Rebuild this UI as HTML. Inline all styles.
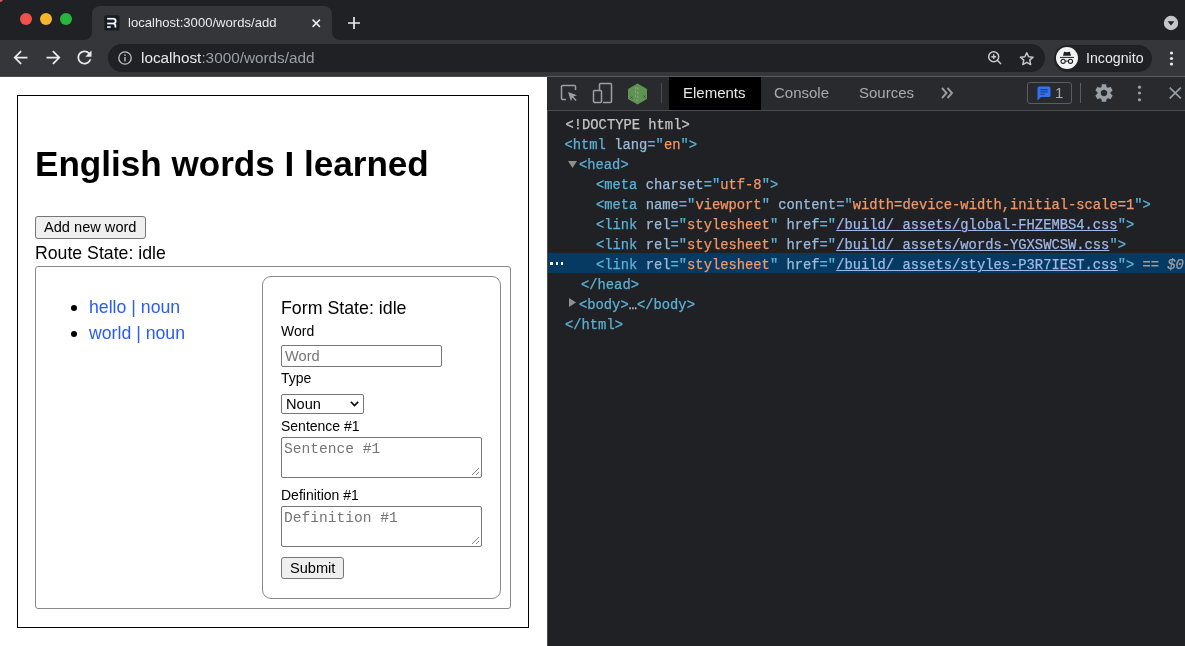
<!DOCTYPE html>
<html><head><meta charset="utf-8">
<style>
*{box-sizing:border-box;margin:0;padding:0}
html,body{width:1185px;height:646px;overflow:hidden;background:#202124;font-family:"Liberation Sans",sans-serif;-webkit-font-smoothing:antialiased}
.t,.m{will-change:transform}
.a{position:absolute}
.t{position:absolute;line-height:1;white-space:pre}
.m{font-family:"Liberation Mono",monospace}
svg{position:absolute;overflow:visible}
</style></head><body>
<!-- ============ CHROME FRAME ============ -->
<div class="a" style="left:0;top:0;width:1185px;height:40px;background:#202124"></div>
<div class="a" style="left:-3px;top:-4px;width:6px;height:6px;border-radius:50%;background:#e8524a"></div>
<div class="a" style="left:20px;top:13px;width:12.4px;height:12.4px;border-radius:50%;background:#f0514a"></div>
<div class="a" style="left:40px;top:13px;width:12.4px;height:12.4px;border-radius:50%;background:#f5b52d"></div>
<div class="a" style="left:60px;top:13px;width:12.4px;height:12.4px;border-radius:50%;background:#27b53c"></div>
<!-- active tab -->
<div class="a" style="left:84px;top:32px;width:256px;height:8px;background:#35363a"></div>
<div class="a" style="left:84px;top:32px;width:8px;height:8px;background:#202124;border-bottom-right-radius:8px"></div>
<div class="a" style="left:332px;top:32px;width:8px;height:8px;background:#202124;border-bottom-left-radius:8px"></div>
<div class="a" style="left:92px;top:6px;width:240px;height:34px;background:#35363a;border-radius:8px 8px 0 0"></div>
<svg style="left:104px;top:15px" width="16" height="16" viewBox="0 0 16 16">
<rect x="0.3" y="0.3" width="15.2" height="15.2" rx="1.5" fill="#1b1b1d"/>
<path d="M3.2 3.7H9.3a2.4 2.4 0 0 1 0 4.8H3.2M9.4 8.6q2 .2 2 2.3V12.6M3.2 12H6.6" stroke="#4f8be8" stroke-width="2.2" fill="none" opacity=".55"/>
<path d="M3.2 3.7H9.3a2.4 2.4 0 0 1 0 4.8H3.2M9.4 8.6q2 .2 2 2.3V12.6M3.2 12H6.6" stroke="#fff" stroke-width="1.5" fill="none"/>
</svg>
<div class="t" style="left:127.5px;top:16.1px;font-size:13.1px;color:#e8eaed">localhost:3000/words/add</div>
<svg style="left:312px;top:18.7px" width="8.5" height="8.5" viewBox="0 0 8.5 8.5"><path d="M0.6 0.6L7.9 7.9M7.9 0.6L0.6 7.9" stroke="#e8eaed" stroke-width="1.5"/></svg>
<svg style="left:348px;top:17px" width="12" height="12" viewBox="0 0 12 12"><path d="M6 0V12M0 6H12" stroke="#e8eaed" stroke-width="1.7"/></svg>
<!-- tab strip dropdown -->
<svg style="left:1163px;top:15px" width="16" height="16" viewBox="0 0 16 16"><circle cx="8" cy="8" r="7.2" fill="#c4c7ca"/><path d="M4.6 6.3H11.4L8 10.4Z" fill="#202124"/></svg>
<!-- toolbar -->
<div class="a" style="left:0;top:40px;width:1185px;height:36px;background:#35363a"></div>
<svg style="left:10.3px;top:47px" width="21" height="21" viewBox="0 0 24 24"><path d="M20 11H7.83l5.59-5.59L12 4l-8 8 8 8 1.41-1.41L7.83 13H20v-2z" fill="#e8eaed"/></svg>
<svg style="left:42.5px;top:47px" width="21" height="21" viewBox="0 0 24 24"><path d="M4 11h12.17l-5.59-5.59L12 4l8 8-8 8-1.41-1.41L16.17 13H4v-2z" fill="#e8eaed"/></svg>
<svg style="left:74px;top:47px" width="21" height="21" viewBox="0 0 24 24"><path d="M17.65 6.35C16.2 4.9 14.21 4 12 4c-4.42 0-7.99 3.58-7.99 8s3.57 8 7.99 8c3.73 0 6.84-2.55 7.73-6h-2.08c-.82 2.33-3.04 4-5.65 4-3.31 0-6-2.69-6-6s2.69-6 6-6c1.66 0 3.14.69 4.22 1.78L13 11h7V4l-2.35 2.35z" fill="#e8eaed"/></svg>
<!-- omnibox -->
<div class="a" style="left:107.5px;top:44px;width:937.5px;height:28px;border-radius:14px;background:#202124"></div>
<svg style="left:117.8px;top:50.8px" width="14" height="14" viewBox="0 0 14 14"><circle cx="7" cy="7" r="6.2" stroke="#c0c3c7" stroke-width="1.3" fill="none"/><rect x="6.3" y="6" width="1.4" height="4.4" fill="#c0c3c7"/><circle cx="7" cy="4.1" r=".85" fill="#c0c3c7"/></svg>
<div class="t" style="left:140.6px;top:50.25px;font-size:15.3px;color:#e8eaed">localhost<span style="color:#9aa0a6">:3000/words/add</span></div>
<svg style="left:987px;top:50px" width="16" height="16" viewBox="0 0 16 16"><circle cx="6.7" cy="6.7" r="5" stroke="#c8cacd" stroke-width="1.5" fill="none"/><path d="M10.3 10.3L14 14M6.7 4.3V9.1M4.3 6.7H9.1" stroke="#c8cacd" stroke-width="1.5"/></svg>
<svg style="left:1019px;top:50.5px" width="15.5" height="15" viewBox="0 0 24 23"><path d="M12 2.5l2.9 6.3 6.9.7-5.2 4.6 1.5 6.8L12 17.4l-6.1 3.5 1.5-6.8-5.2-4.6 6.9-.7z" stroke="#c8cacd" stroke-width="2.3" fill="none" stroke-linejoin="round"/></svg>
<!-- incognito pill -->
<div class="a" style="left:1053.7px;top:44.5px;width:98.5px;height:27px;border-radius:13.5px;background:#202124"></div>
<div class="a" style="left:1055.9px;top:46.7px;width:22.3px;height:22.3px;border-radius:50%;background:#f1f3f4"></div>
<svg style="left:1056px;top:47px" width="22" height="22" viewBox="0 0 22 22"><path d="M7 8.7L7.9 5.2Q8.1 4.6 8.7 4.8L11 5.3L13.3 4.8Q13.9 4.6 14.1 5.2L15 8.7Z" fill="#202124"/><rect x="4" y="9.9" width="14" height="1" fill="#202124"/><circle cx="7.1" cy="14.3" r="2.1" stroke="#202124" stroke-width="1.1" fill="none"/><circle cx="14.5" cy="14.3" r="2.1" stroke="#202124" stroke-width="1.1" fill="none"/><path d="M9.2 14.1H12.4" stroke="#202124" stroke-width="1"/></svg>
<div class="t" style="left:1085.9px;top:51.2px;font-size:14.2px;color:#e8eaed">Incognito</div>
<svg style="left:1169px;top:51px" width="5" height="15" viewBox="0 0 5 15"><circle cx="2.5" cy="2" r="1.6" fill="#e8eaed"/><circle cx="2.5" cy="7.5" r="1.6" fill="#e8eaed"/><circle cx="2.5" cy="13" r="1.6" fill="#e8eaed"/></svg>

<!-- ============ PAGE ============ -->
<div class="a" style="left:0;top:76px;width:547px;height:570px;background:#fff"></div>
<div class="a" style="left:0;top:75.5px;width:547px;height:1px;background:#4a4b4f"></div>
<div class="a" style="left:17px;top:95px;width:512px;height:533px;border:1.2px solid #000"></div>
<div class="t" style="left:35.2px;top:146.1px;font-size:35.1px;font-weight:bold;color:#000">English words I learned</div>
<div class="a" style="left:35px;top:216px;width:111px;height:22.5px;border:1px solid #767676;border-radius:3px;background:#efefef"></div>
<div class="t" style="left:44.2px;top:220px;font-size:14.6px;color:#000">Add new word</div>
<div class="t" style="left:35.1px;top:244.7px;font-size:17.7px;color:#000">Route State: idle</div>
<div class="a" style="left:35px;top:266px;width:476px;height:343px;border:1px solid #8a8a8a;border-radius:3px"></div>
<div class="a" style="left:70.8px;top:304.8px;width:6.4px;height:6.4px;border-radius:50%;background:#000"></div>
<div class="a" style="left:70.8px;top:330.7px;width:6.4px;height:6.4px;border-radius:50%;background:#000"></div>
<div class="t" style="left:88.6px;top:298.8px;font-size:17.7px;color:#285cf4">hello | noun</div>
<div class="t" style="left:88.6px;top:324.6px;font-size:17.7px;color:#285cf4">world | noun</div>
<div class="a" style="left:262px;top:276px;width:239px;height:323px;border:1px solid #8a8a8a;border-radius:9px"></div>
<div class="t" style="left:280.6px;top:299.7px;font-size:17.8px;color:#000">Form State: idle</div>
<div class="t" style="left:280.6px;top:323.6px;font-size:14px;color:#000">Word</div>
<div class="a" style="left:281px;top:345px;width:161px;height:22px;border:1px solid #767676;border-radius:2px;background:#fff"></div>
<div class="t" style="left:284.5px;top:349.1px;font-size:14.6px;color:#757575">Word</div>
<div class="t" style="left:280.6px;top:370.8px;font-size:14px;color:#000">Type</div>
<div class="a" style="left:281px;top:394px;width:83px;height:20px;border:1px solid #767676;border-radius:2px;background:#fff"></div>
<div class="t" style="left:285.5px;top:397px;font-size:14.6px;color:#000">Noun</div>
<svg style="left:349.5px;top:401px" width="9" height="6" viewBox="0 0 9 6"><path d="M0.8 0.8L4.5 4.6L8.2 0.8" stroke="#000" stroke-width="1.6" fill="none"/></svg>
<div class="t" style="left:280.6px;top:419.2px;font-size:14px;color:#000">Sentence #1</div>
<div class="a" style="left:281px;top:437px;width:201px;height:41px;border:1px solid #767676;border-radius:2px;background:#fff"></div>
<div class="t m" style="left:283.8px;top:441.8px;font-size:14.6px;color:#757575">Sentence #1</div>
<svg style="left:470px;top:466px" width="10" height="10" viewBox="0 0 10 10"><path d="M9 2L2 9M9 6L6 9" stroke="#8a8a8a" stroke-width="1"/></svg>
<div class="t" style="left:280.6px;top:488px;font-size:14px;color:#000">Definition #1</div>
<div class="a" style="left:281px;top:506px;width:201px;height:41px;border:1px solid #767676;border-radius:2px;background:#fff"></div>
<div class="t m" style="left:283.8px;top:510.8px;font-size:14.6px;color:#757575">Definition #1</div>
<svg style="left:470px;top:535px" width="10" height="10" viewBox="0 0 10 10"><path d="M9 2L2 9M9 6L6 9" stroke="#8a8a8a" stroke-width="1"/></svg>
<div class="a" style="left:281px;top:557px;width:63px;height:22px;border:1px solid #767676;border-radius:3px;background:#efefef"></div>
<div class="t" style="left:289.5px;top:560.8px;font-size:14.6px;color:#000">Submit</div>

<!-- ============ DEVTOOLS ============ -->
<div class="a" style="left:547px;top:76px;width:638px;height:570px;background:#202124"></div>
<div class="a" style="left:547px;top:76px;width:1px;height:570px;background:#4a4a4d"></div>
<div class="a" style="left:547px;top:76px;width:638px;height:35px;background:#292a2d;border-top:1px solid #5a5b5e;border-bottom:1px solid #4a4c50"></div>
<div class="a" style="left:669px;top:77px;width:92px;height:33px;background:#000"></div>
<svg style="left:560px;top:84px" width="18" height="18" viewBox="0 0 18 18"><path d="M6 15.5H2.5Q1.5 15.5 1.5 14.5V2.5Q1.5 1.5 2.5 1.5H14.5Q15.5 1.5 15.5 2.5V6" stroke="#9aa0a6" stroke-width="1.5" fill="none"/><path d="M8 8L17 11.3L13.3 12.6L16.6 15.9L15.6 16.9L12.3 13.6L11 17.3Z" fill="#9aa0a6"/></svg>
<svg style="left:592px;top:82px" width="21" height="22" viewBox="0 0 21 22"><path d="M7.5 8V2.5Q7.5 1.5 8.5 1.5H18.5Q19.5 1.5 19.5 2.5V19.5Q19.5 20.5 18.5 20.5H11" stroke="#9aa0a6" stroke-width="1.5" fill="none"/><rect x="1.5" y="8.5" width="8" height="12" rx="1" stroke="#9aa0a6" stroke-width="1.5" fill="none"/></svg>
<svg style="left:627px;top:82.5px" width="21" height="22" viewBox="0 0 21 22"><path d="M10.5 0.5L20 6V16L10.5 21.5L1 16V6Z" fill="#5e9352"/><path d="M8.5 4V6M10.8 4.5V6.5M8.5 7.5V9.5M10.8 9V11M8.5 12V14M10.8 13V15M10 16.5V18.5" stroke="#a0a8a0" stroke-width="1" opacity=".8"/><path d="M3.5 13.5L5.5 15.5M3.5 15.5L5.5 13.5M16.5 12.5L18.5 14.5M16.5 14.5L18.5 12.5" stroke="#2f4f2a" stroke-width=".8"/></svg>
<div class="a" style="left:661px;top:83px;width:1px;height:20px;background:#4a4c50"></div>
<div class="t" style="left:683.3px;top:85.3px;font-size:15px;color:#e8e8e8">Elements</div>
<div class="t" style="left:774px;top:85.3px;font-size:15px;color:#a9abae">Console</div>
<div class="t" style="left:859px;top:85.3px;font-size:15px;color:#a9abae">Sources</div>
<svg style="left:941px;top:87px" width="13" height="12" viewBox="0 0 13 12"><path d="M1 1L5.5 6L1 11M6.5 1L11 6L6.5 11" stroke="#9a9c9f" stroke-width="1.9" fill="none"/></svg>
<div class="a" style="left:1027.2px;top:82.2px;width:44.5px;height:21.5px;border:1px solid #5a5d61;border-radius:3px"></div>
<svg style="left:1036.5px;top:86px" width="14" height="15" viewBox="0 0 14 15"><path d="M2 0.5H12Q13.5 0.5 13.5 2V9.5Q13.5 11 12 11H4L0.5 14.5V2Q0.5 0.5 2 0.5Z" fill="#3372f5"/><path d="M3.3 3.6H10.7M3.3 5.9H10.7M3.3 8.2H8" stroke="#1d3d8a" stroke-width="1.1"/></svg>
<div class="t" style="left:1055px;top:85.3px;font-size:15px;color:#a9abae">1</div>
<div class="a" style="left:1079.5px;top:83px;width:1.2px;height:20px;background:#5a5d61"></div>
<svg style="left:1092.5px;top:81.6px" width="22" height="22" viewBox="0 0 24 24"><path d="M19.14 12.94c.04-.3.06-.61.06-.94 0-.32-.02-.64-.07-.94l2.03-1.58a.49.49 0 0 0 .12-.61l-1.92-3.32a.488.488 0 0 0-.59-.22l-2.39.96c-.5-.38-1.03-.7-1.62-.94l-.36-2.54a.484.484 0 0 0-.48-.41h-3.84c-.24 0-.43.17-.47.41l-.36 2.54c-.59.24-1.13.57-1.62.94l-2.39-.96c-.22-.08-.47 0-.59.22L2.74 8.87c-.12.21-.08.47.12.61l2.03 1.58c-.05.3-.09.63-.09.94s.02.64.07.94l-2.03 1.58a.49.49 0 0 0-.12.61l1.92 3.32c.12.22.37.29.59.22l2.39-.96c.5.38 1.03.7 1.62.94l.36 2.54c.05.24.24.41.48.41h3.84c.24 0 .44-.17.47-.41l.36-2.54c.59-.24 1.13-.56 1.62-.94l2.39.96c.22.08.47 0 .59-.22l1.92-3.32c.12-.22.07-.47-.12-.61l-2.01-1.58zM12 15.6c-1.98 0-3.6-1.62-3.6-3.6s1.62-3.6 3.6-3.6 3.6 1.62 3.6 3.6-1.62 3.6-3.6 3.6z" fill="#9aa0a6"/></svg>
<svg style="left:1136.5px;top:85px" width="5" height="17" viewBox="0 0 5 17"><circle cx="2.5" cy="2.2" r="1.6" fill="#9aa0a6"/><circle cx="2.5" cy="8" r="1.6" fill="#9aa0a6"/><circle cx="2.5" cy="14.8" r="1.6" fill="#9aa0a6"/></svg>
<svg style="left:1169px;top:87px" width="12.5" height="12" viewBox="0 0 12.5 12"><path d="M0.7 0.7L11.8 11.3M11.8 0.7L0.7 11.3" stroke="#9aa0a6" stroke-width="1.6"/></svg>

<!-- DOM tree -->
<div class="a" style="left:548px;top:253px;width:637px;height:20px;background:#073a62"></div>
<div class="a m" style="left:0;top:0;font-size:13.8px;line-height:20px;white-space:pre;color:#5db0d7;-webkit-text-stroke:0.25px currentColor">
<div class="a" style="left:565.5px;top:116px;color:#c5c5c5">&lt;!DOCTYPE html&gt;</div>
<div class="a" style="left:564.5px;top:136px">&lt;html <span style="color:#9bbbdc">lang</span>="<span style="color:#f29766">en</span>"&gt;</div>
<svg style="left:568px;top:161px" width="9" height="7" viewBox="0 0 9 7"><path d="M0 0H9L4.5 7Z" fill="#8f8f8f"/></svg>
<div class="a" style="left:579px;top:156px">&lt;head&gt;</div>
<div class="a" style="left:596px;top:176px">&lt;meta <span style="color:#9bbbdc">charset</span>="<span style="color:#f29766">utf-8</span>"&gt;</div>
<div class="a" style="left:596px;top:196px">&lt;meta <span style="color:#9bbbdc">name</span>="<span style="color:#f29766">viewport</span>" <span style="color:#9bbbdc">content</span>="<span style="color:#f29766">width=device-width,initial-scale=1</span>"&gt;</div>
<div class="a" style="left:596px;top:216px">&lt;link <span style="color:#9bbbdc">rel</span>="<span style="color:#f29766">stylesheet</span>" <span style="color:#9bbbdc">href</span>="<span style="color:#9fb8e8;text-decoration:underline">/build/_assets/global-FHZEMBS4.css</span>"&gt;</div>
<div class="a" style="left:596px;top:236px">&lt;link <span style="color:#9bbbdc">rel</span>="<span style="color:#f29766">stylesheet</span>" <span style="color:#9bbbdc">href</span>="<span style="color:#9fb8e8;text-decoration:underline">/build/_assets/words-YGXSWCSW.css</span>"&gt;</div>
<div class="a" style="left:550.3px;top:262px;width:2.6px;height:2.6px;background:#fff"></div><div class="a" style="left:555.5px;top:262px;width:2.6px;height:2.6px;background:#fff"></div><div class="a" style="left:560.7px;top:262px;width:2.6px;height:2.6px;background:#fff"></div>
<div class="a" style="left:596px;top:256px">&lt;link <span style="color:#9bbbdc">rel</span>="<span style="color:#f29766">stylesheet</span>" <span style="color:#9bbbdc">href</span>="<span style="color:#9fb8e8;text-decoration:underline">/build/_assets/styles-P3R7IEST.css</span>"&gt; <span style="color:#9aa0a6">== <i>$0</i></span></div>
<div class="a" style="left:581px;top:276px">&lt;/head&gt;</div>
<svg style="left:569px;top:298px" width="7" height="9" viewBox="0 0 7 9"><path d="M0 0V9L7 4.5Z" fill="#8f8f8f"/></svg>
<div class="a" style="left:579px;top:296px">&lt;body&gt;<span style="color:#c5c5c5">…</span>&lt;/body&gt;</div>
<div class="a" style="left:565px;top:316px">&lt;/html&gt;</div>
</div>
</body></html>
